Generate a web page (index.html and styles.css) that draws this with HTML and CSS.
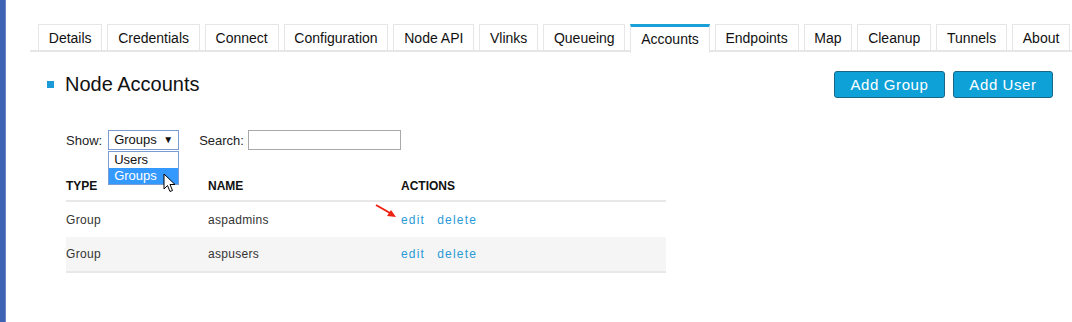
FILE: index.html
```html
<!DOCTYPE html>
<html lang="en">
<head>
    <meta charset="UTF-8">
    <title>Node Accounts</title>
    <link rel="stylesheet" href="styles.css">
</head>
<body>
    <div class="frame">
        <!-- Tabs -->
        <ul class="tabs">
            <li>Details</li>
            <li>Credentials</li>
            <li>Connect</li>
            <li>Configuration</li>
            <li>Node API</li>
            <li>Vlinks</li>
            <li>Queueing</li>
            <li class="active">Accounts</li>
            <li>Endpoints</li>
            <li>Map</li>
            <li>Cleanup</li>
            <li>Tunnels</li>
            <li>About</li>
        </ul>

        <!-- Header -->
        <div class="page-head">
            <h1><span class="bullet"></span>Node Accounts</h1>
            <div class="actions-top">
                <button class="btn">Add Group</button>
                <button class="btn">Add User</button>
            </div>
        </div>

        <!-- Filters -->
        <div class="filters">
            <label>Show:</label>
            <div class="select-wrap">
                <div class="select">Groups <span class="caret">&#9660;</span></div>
                <ul class="options">
                    <li>Users</li>
                    <li class="selected">Groups</li>
                </ul>
                <svg class="cursor" width="14" height="20" viewBox="0 0 14 20">
                    <path d="M1 1 L1 16 L4.5 12.5 L7 18.5 L9.5 17.5 L7 11.5 L12 11.5 Z" fill="#fff" stroke="#000" stroke-width="1"/>
                </svg>
            </div>
            <label class="search-label">Search:</label>
            <input type="text" class="search">
        </div>

        <!-- Table -->
        <table class="accounts">
            <thead>
                <tr><th class="c-type">TYPE</th><th class="c-name">NAME</th><th>ACTIONS</th></tr>
            </thead>
            <tbody>
                <tr>
                    <td>Group</td><td>aspadmins</td>
                    <td class="links">
                        <svg class="arrow" width="24" height="16" viewBox="0 0 24 16">
                            <line x1="1" y1="1" x2="15" y2="9" stroke="#ee2211" stroke-width="2"/>
                            <polygon points="21,13 12,12 16,6" fill="#ee2211"/>
                        </svg>
                        <a>edit</a><a>delete</a>
                    </td>
                </tr>
                <tr class="alt">
                    <td>Group</td><td>aspusers</td>
                    <td class="links"><a>edit</a><a>delete</a></td>
                </tr>
            </tbody>
        </table>
    </div>
</body>
</html>
```

FILE: styles.css
```css
/* General Styles */
body {
    margin: 0;
    padding: 0;
    font-family: 'Liberation Sans', Arial, sans-serif;
    color: #222;
    background: #fff;
}

.frame {
    height: 322px;
    border-left: 5px solid #3f63b4;
    box-shadow: inset 1px 0 0 #6d86c4;
    padding-top: 24px;
    box-sizing: border-box;
}

/* Tabs */
.tabs {
    list-style: none;
    margin: 0 0 0 25px;
    padding: 0 0 0 8px;
    display: flex;
    gap: 5px;
    border-bottom: 2px solid #e6e6e6;
    height: 26px;
}

.tabs li {
    border: 1px solid #e6e6e6;
    border-bottom: none;
    padding: 1px 9.8px 0;
    font-size: 14px;
    line-height: 25px;
    color: #111;
    white-space: nowrap;
}

.tabs li.active {
    border-top: 3px solid #1a9fd6;
    padding-top: 0;
    line-height: 25px;
    background: #fff;
    height: 26px;
}

/* Header */
.page-head {
    display: flex;
    justify-content: space-between;
    align-items: center;
    margin: 19px 19px 0 42px;
}

h1 {
    margin: 0;
    font-size: 20px;
    font-weight: normal;
    display: flex;
    align-items: center;
    color: #111;
}

.bullet {
    width: 7px;
    height: 7px;
    background: #1a9bd7;
    margin-right: 11px;
}

.actions-top {
    display: flex;
    gap: 8px;
}

.btn {
    font-family: 'Liberation Sans', Arial, sans-serif;
    background: #0ea1d8;
    color: #fff;
    border: 1px solid #1a6785;
    border-radius: 3px;
    font-size: 15px;
    letter-spacing: 0.6px;
    height: 27px;
    padding: 0 14px;
}

.btn:first-child {
    width: 111px;
}

.btn:last-child {
    width: 100px;
}

/* Filters */
.filters {
    display: flex;
    align-items: center;
    margin: 32px 0 0 61px;
    font-size: 13px;
    color: #222;
    height: 20px;
}

.select-wrap {
    position: relative;
    margin-left: 6px;
}

.select {
    width: 71px;
    height: 20px;
    box-sizing: border-box;
    border: 1px solid #7a9cd3;
    padding: 0 5px;
    font-size: 13px;
    line-height: 18px;
    position: relative;
    color: #111;
}

.caret {
    position: absolute;
    right: 5px;
    top: 0;
    font-size: 10px;
}

.options {
    position: absolute;
    top: 21px;
    left: 0;
    width: 71px;
    box-sizing: border-box;
    margin: 0;
    padding: 0;
    list-style: none;
    border: 1px solid #7a9cd3;
    background: #fff;
    z-index: 2;
}

.options li {
    font-size: 13px;
    line-height: 16px;
    padding: 0 5px;
    color: #111;
}

.options li.selected {
    background: #3399ff;
    color: #fff;
}

.cursor {
    position: absolute;
    left: 55px;
    top: 43px;
    z-index: 3;
}

.search-label {
    margin-left: 20px;
}

.search {
    margin-left: 4px;
    width: 153px;
    height: 20px;
    box-sizing: border-box;
    border: 1px solid #a9a9a9;
    padding: 0;
}

/* Table */
.accounts {
    margin: 29px 0 0 61px;
    width: 600px;
    border-collapse: collapse;
    font-size: 12px;
}

.accounts th {
    text-align: left;
    font-weight: bold;
    font-size: 12px;
    color: #111;
    padding: 0 0 7px;
    border-bottom: 2px solid #e8e8e8;
}

.accounts .c-type {
    width: 142px;
}

.accounts .c-name {
    width: 193px;
}

.accounts td {
    height: 34px;
    padding: 0;
    color: #333;
    letter-spacing: 0.3px;
    border-bottom: 2px solid #e8e8e8;
}

.accounts tr:first-child td {
    height: 35px;
    border-bottom: none;
}

.accounts tr.alt td {
    background: #f5f5f5;
}

.links {
    position: relative;
}

.links a {
    color: #2a9ad6;
    letter-spacing: 1.2px;
    margin-right: 12px;
}

.arrow {
    position: absolute;
    left: -26px;
    top: 2px;
}
```
